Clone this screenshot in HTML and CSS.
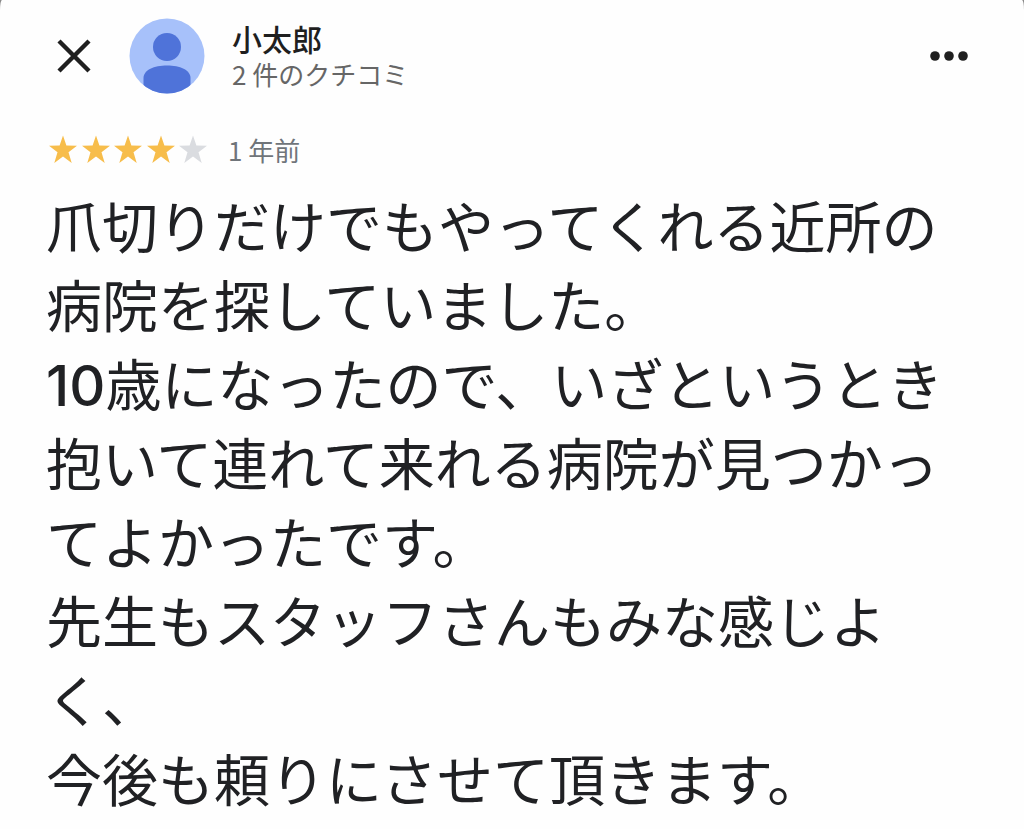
FILE: index.html
```
<!DOCTYPE html>
<html lang="ja">
<head>
  <meta charset="UTF-8" />
  <meta name="viewport" content="width=device-width, initial-scale=1.0"/>
  <title>クチコミ</title>
  <link rel="stylesheet" href="styles.css">
</head>
<body>
  <main class="sheet">
    <header class="header">
      <button class="icon-btn" type="button" aria-label="閉じる">
        <svg width="38" height="34" viewBox="0 0 38 34"><path d="M5 2L35 32M35 2L5 32" stroke="currentColor" stroke-width="4.4"/></svg>
      </button>
      <svg class="avatar" width="76" height="76" viewBox="0 0 76 76" aria-hidden="true">
        <defs><clipPath id="face"><circle cx="38" cy="38" r="37.5"/></clipPath></defs>
        <circle cx="38" cy="38" r="37.5" fill="#a7c1fa"/>
        <g clip-path="url(#face)" fill="#4f73d9">
          <circle cx="38" cy="29" r="14"/>
          <path d="M14.500 76V60C14.500 52 25 47.500 38 47.500S61.500 52 61.500 60V76Z"/>
        </g>
      </svg>
      <div class="author">
        <h1 class="name">小太郎</h1>
        <p class="count">2 件のクチコミ</p>
      </div>
      <button class="icon-btn" type="button" aria-label="その他">
        <svg width="38" height="10" viewBox="0 0 38 10" fill="currentColor"><circle cx="5" cy="5" r="4.800"/><circle cx="19" cy="5" r="4.800"/><circle cx="33" cy="5" r="4.800"/></svg>
      </button>
    </header>

    <div class="meta">
      <svg class="stars" width="160" height="30" viewBox="0 0 160 30" role="img" aria-label="5 つ星のうち 4">
        <defs><path id="star" d="M14 0.500L17.400 10.600L28 10.700L19.500 17.200L22.700 28L14 21.600L5.300 28L8.500 17.200L0 10.700L10.600 10.600Z"/></defs>
        <g fill="#f7bd4b">
          <use href="#star" x="1"/>
          <use href="#star" x="34"/>
          <use href="#star" x="66"/>
          <use href="#star" x="99"/>
        </g>
        <use href="#star" x="131" fill="#dadce0"/>
      </svg>
      <span class="time">1 年前</span>
    </div>

    <p class="review">爪切りだけでもやってくれる近所の<br>病院を探していました。<br><span class="num">10</span>歳になったので、いざというとき<br>抱いて連れて来れる病院が見つかっ<br>てよかったです。<br>先生もスタッフさんもみな感じよ<br>く、<br>今後も頼りにさせて頂きます。</p>
  </main>
</body>
</html>
```
FILE: styles.css
```
body {
  margin: 0;
  background: #8a8a8a;
  font-family: "Noto Sans CJK JP", sans-serif;
  color: #202124;
}
.sheet {
  box-sizing: border-box;
  min-height: 100vh;
  padding: 16px 48px 8px 46px;
  background: #fefefe;
  border-radius: 2px 2px 0 0 / 10px 10px 0 0;
}
.header {
  display: flex;
  align-items: center;
  height: 80px;
}
.icon-btn {
  display: flex;
  align-items: center;
  justify-content: center;
  padding: 8px;
  border: 0;
  background: none;
  color: #1f1f1f;
  cursor: pointer;
}
.avatar {
  margin: 0 27px 0 29px;
}
.author {
  flex: 1;
}
.name,
.count {
  margin: 0;
  line-height: 36px;
}
.name {
  font-size: 30px;
  font-weight: 500;
  color: #1f1f1f;
}
.count {
  font-size: 26px;
  color: #666;
}
.meta {
  display: flex;
  align-items: center;
  gap: 20px;
  height: 40px;
  margin-top: 34px;
  padding-left: 2px;
}
.time {
  font-size: 26px;
  line-height: 32px;
  color: #70757a;
}
.review {
  margin: 14px 0 0;
  font-size: 56px;
  line-height: 79px;
  white-space: nowrap;
}
.num {
  font-family: Inter, sans-serif;
  font-weight: 500;
  line-height: 1;
}
```
